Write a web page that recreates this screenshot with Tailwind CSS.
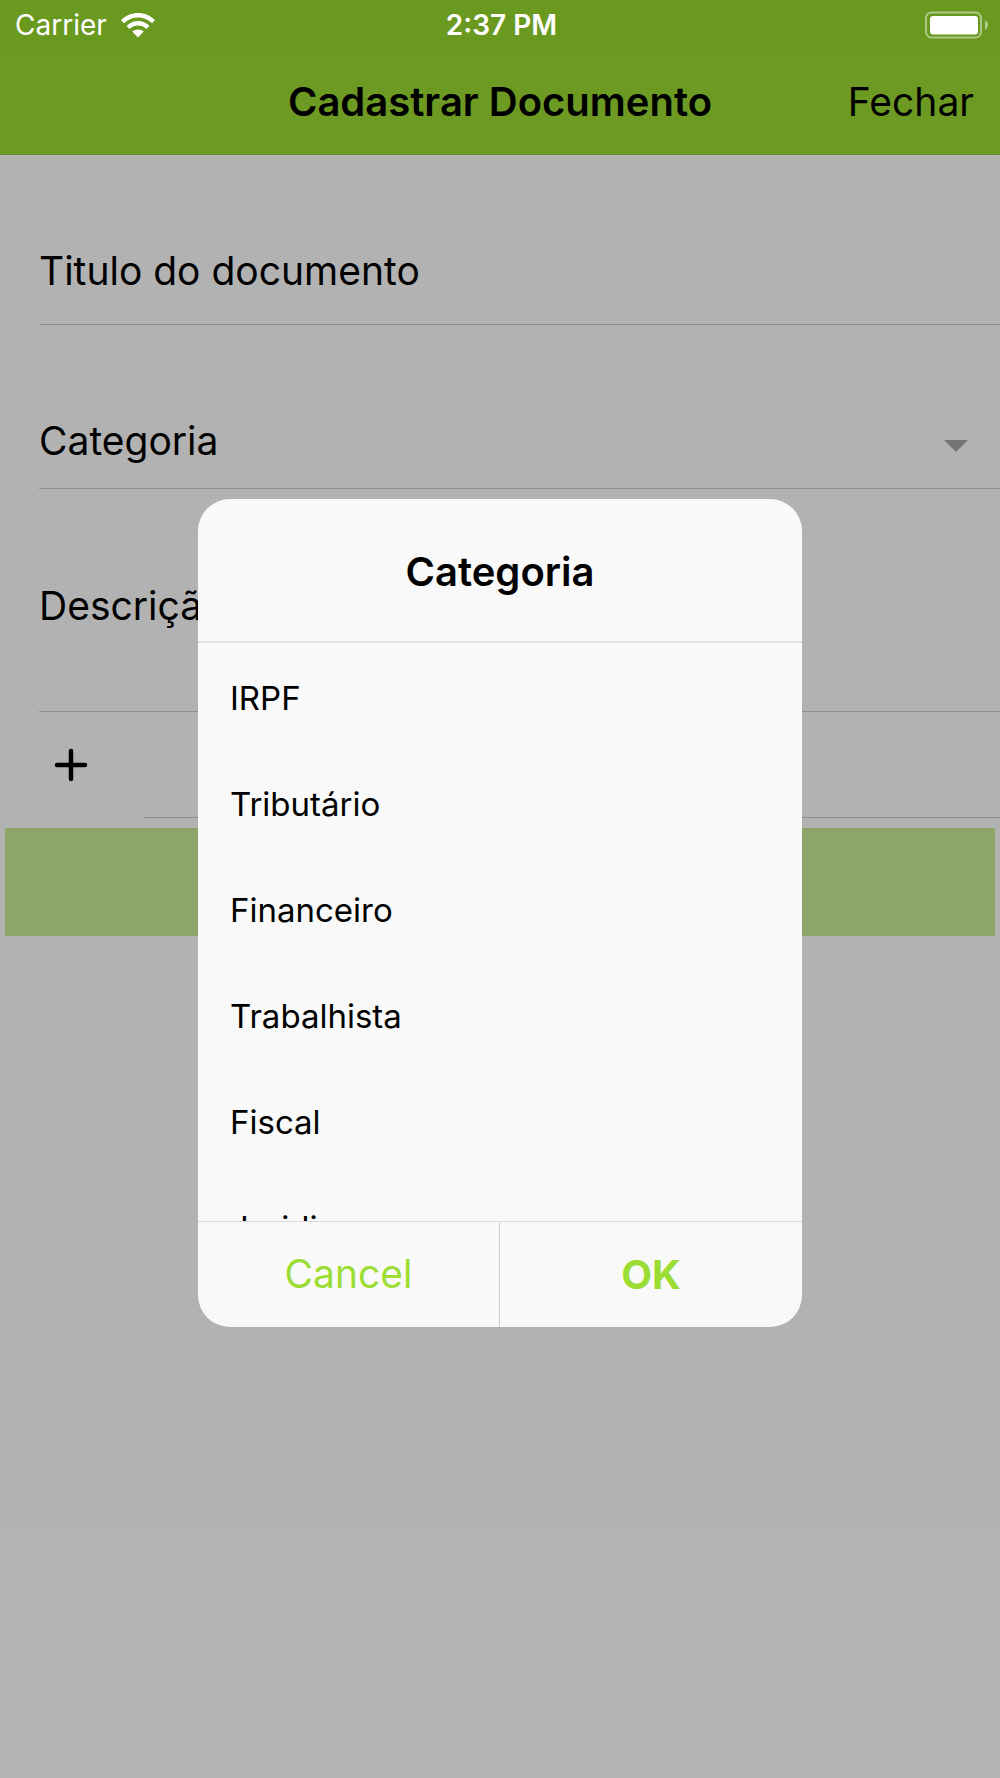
<!DOCTYPE html>
<html lang="pt-BR">

<head>
  <meta charset="UTF-8">
  <meta name="viewport" content="width=device-width, initial-scale=1.0">
  <title>Cadastrar Documento</title>
  <script src="https://cdn.jsdelivr.net/npm/@tailwindcss/browser@4"></script>
</head>

<body class="relative min-h-screen bg-white font-['Inter',sans-serif] text-black">

  <!-- Status bar, stays above the backdrop -->
  <div class="relative z-20 grid h-[50px] grid-cols-3 items-center bg-[#6a9920] pl-[15px] pr-3 text-[28px] leading-8 text-white">
    <div class="flex items-center gap-[14px]">
      <span>Carrier</span>
      <svg class="h-[25px] w-[34px]" viewBox="0 0 34 25" fill="currentColor" aria-hidden="true">
        <path d="M0 7.2C9.5-2.4 24.500-2.400 34 7.200L31 10.300C23.300 2.600 10.700 2.600 3 10.300Z" />
        <path d="M5.500 12.900C12 6.500 22 6.500 28.500 12.900L25.400 16C20.700 11.400 13.300 11.400 8.600 16Z" />
        <path d="M11.200 18.600C14.500 15.700 19.500 15.700 22.800 18.600L17 24.500Z" />
      </svg>
    </div>
    <span class="text-center font-semibold">2:37 PM</span>
    <svg class="h-7 w-[63px] justify-self-end" viewBox="0 0 63 28" aria-hidden="true">
      <rect x="1" y="1.500" width="55" height="25" rx="5.500" fill="none" stroke="#fff" stroke-opacity=".45" stroke-width="2" />
      <rect x="5" y="5" width="48" height="18.500" rx="3" fill="#fff" />
      <path d="M60 9.500Q63 11 63 14T60 19Z" fill="#fff" fill-opacity=".5" />
    </svg>
  </div>

  <!-- Navigation bar -->
  <header class="grid h-[105px] grid-cols-[1fr_auto_1fr] items-center border-b border-[#94c843] bg-[#9bdd33] px-[26px]">
    <h1 class="col-start-2 text-[40px] leading-12 font-semibold">Cadastrar Documento</h1>
    <button type="button" class="justify-self-end text-[39px] leading-12">Fechar</button>
  </header>

  <form>
    <div class="ml-[39px] flex h-[170px] items-end border-b border-[#d0d0d0] pb-[29px]">
      <label for="titulo" class="text-[39px] leading-12">Titulo do documento</label>
      <input id="titulo" type="text" class="h-12 min-w-0 flex-1 pl-4 text-[39px] outline-none">
    </div>
    <div class="ml-[39px] flex h-[164px] items-end border-b border-[#d0d0d0] pr-8 pb-[23px]">
      <label for="categoria" class="text-[39px] leading-12">Categoria</label>
      <select id="categoria" class="h-12 min-w-0 flex-1 appearance-none pl-4 text-[39px] outline-none"></select>
      <svg class="mb-[13px] h-3 w-6" viewBox="0 0 24 12" fill="#a8a8a8" aria-hidden="true">
        <path d="M0 0H24L12 12Z" />
      </svg>
    </div>
    <div class="ml-[39px] flex h-[223px] items-end border-b border-[#d0d0d0] pb-[81px]">
      <label for="descricao" class="text-[39px] leading-12">Descrição</label>
      <textarea id="descricao" rows="1" class="h-12 min-w-0 flex-1 resize-none pl-4 text-[39px] outline-none"></textarea>
    </div>
    <div class="flex h-[106px]">
      <button type="button" aria-label="Adicionar arquivo" class="flex w-36 items-center pl-[54px]">
        <svg class="h-[34px] w-[34px]" viewBox="0 0 34 34" fill="none" stroke="currentColor" stroke-width="4.500" stroke-linecap="round" aria-hidden="true">
          <path d="M17 3V31M3 17H31" />
        </svg>
      </button>
      <div class="flex-1 border-b border-[#d0d0d0]"></div>
    </div>
    <div class="px-[5px] pt-[10px]">
      <button type="submit" disabled aria-label="Salvar" class="block h-[108px] w-full bg-[#cbed99]"></button>
    </div>
  </form>

  <!-- Category picker -->
  <div class="absolute inset-0 z-10 flex items-center justify-center bg-black/30 px-6 pt-12">
    <div role="dialog" aria-labelledby="picker-title" class="flex h-[828px] w-full max-w-[604px] flex-col overflow-hidden rounded-[32px] bg-[#f9f9f9]">
      <h2 id="picker-title" class="border-b-2 border-[#e3e3e3] pt-12 pb-11 text-center text-[40px] leading-[50px] font-semibold">Categoria</h2>
      <div class="min-h-0 flex-1 overflow-hidden pt-[3px] text-[33px]">
        <label class="flex h-[106px] items-center justify-between px-8">IRPF
          <input type="radio" name="cat" class="size-8 appearance-none">
        </label>
        <label class="flex h-[106px] items-center justify-between px-8">Tributário
          <input type="radio" name="cat" class="size-8 appearance-none">
        </label>
        <label class="flex h-[106px] items-center justify-between px-8">Financeiro
          <input type="radio" name="cat" class="size-8 appearance-none">
        </label>
        <label class="flex h-[106px] items-center justify-between px-8">Trabalhista
          <input type="radio" name="cat" class="size-8 appearance-none">
        </label>
        <label class="flex h-[106px] items-center justify-between px-8">Fiscal
          <input type="radio" name="cat" class="size-8 appearance-none">
        </label>
        <label class="flex h-[106px] items-center justify-between px-8">Juridico
          <input type="radio" name="cat" class="size-8 appearance-none">
        </label>
      </div>
      <div class="grid h-[106px] grid-cols-2 border-t border-[#dbdbdb] text-[#9bdd33]">
        <button type="button" class="border-r border-[#cfcfcf] text-[39px]">Cancel</button>
        <button type="button" class="text-[40px] font-bold">OK</button>
      </div>
    </div>
  </div>

</body>

</html>
